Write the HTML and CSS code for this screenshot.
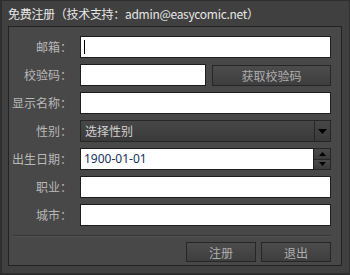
FILE: index.html
```
<!DOCTYPE html>
<html lang="zh">
<head>
<meta charset="utf-8">
<link rel="stylesheet" href="styles.css">
</head>
<body>
<div class="window">
  <div class="title">免费注册（技术支持：admin@easycomic.net）</div>
  <div class="panel">
    <div class="form">
      <label class="lbl">邮箱：</label>
      <div class="field"><div class="input"><span class="caret"></span></div></div>

      <label class="lbl">校验码：</label>
      <div class="field split">
        <div class="input short"></div>
        <button class="btn get">获取校验码</button>
      </div>

      <label class="lbl">显示名称：</label>
      <div class="field"><div class="input"></div></div>

      <label class="lbl">性别：</label>
      <div class="field">
        <div class="select">
          <span class="sel-text">选择性别</span>
          <span class="sel-arrow"><svg width="9" height="5" viewBox="0 0 9 5"><path d="M0 0h9L4.5 5z" fill="#000"/></svg></span>
        </div>
      </div>

      <label class="lbl">出生日期：</label>
      <div class="field">
        <div class="date">
          <div class="input date-in">1900-01-01</div>
          <div class="spin">
            <span class="spin-btn"><svg width="7" height="4" viewBox="0 0 7 4"><path d="M0 4h7L3.5 0z" fill="#000"/></svg></span>
            <span class="spin-btn"><svg width="7" height="4" viewBox="0 0 7 4"><path d="M0 0h7L3.5 4z" fill="#000"/></svg></span>
          </div>
        </div>
      </div>

      <label class="lbl">职业：</label>
      <div class="field"><div class="input"></div></div>

      <label class="lbl">城市：</label>
      <div class="field"><div class="input"></div></div>
    </div>
    <div class="sep"></div>
    <div class="actions">
      <button class="btn act">注册</button>
      <button class="btn act">退出</button>
    </div>
  </div>
</div>
</body>
</html>
```

FILE: styles.css
```
* { box-sizing: border-box; }
html, body { margin: 0; padding: 0; background: #3c3c3c; }
body {
  font-family: "Noto Sans CJK SC", "Noto Sans", sans-serif;
  font-size: 12px;
}
.window {
  width: 350px;
  height: 275px;
  background: #404040;
  border: 2px solid #2e2e2e;
  border-top-width: 1px;
  border-right-width: 1px;
  display: flex;
  flex-direction: column;
}
.title {
  height: 25px;
  line-height: 25px;
  padding-left: 6px;
  color: #e6e6e6;
  font-size: 12px;
  letter-spacing: -0.3px;
}
.panel {
  margin-left: 6px;
  width: 334px;
  height: 240px;
  background: #484848;
  border: 1px solid #222;
  padding: 9px 10px 0 0;
  display: flex;
  flex-direction: column;
}
.form {
  display: grid;
  grid-template-columns: 71px 1fr;
  row-gap: 6px;
}
.lbl {
  height: 22px;
  line-height: 22px;
  text-align: right;
  padding-right: 8px;
  color: #b8b8b8;
}
.field { height: 22px; display: flex; }
.split { gap: 6px; }
.input {
  flex: 1;
  height: 22px;
  background: #fff;
  border: 1px solid #1e1e1e;
  position: relative;
}
.short { flex: 0 0 126px; }
.caret {
  position: absolute;
  left: 3px;
  top: 3px;
  width: 1px;
  height: 14px;
  background: #000;
}
.btn {
  font-family: inherit;
  font-size: 12px;
  color: #aeaeae;
  background: linear-gradient(#4c4c4c, #3e3e3e);
  border: 1px solid #262626;
  padding: 0;
  margin: 0;
}
.get { flex: 1; height: 21px; margin-top: 1px; }
.select {
  flex: 1;
  display: flex;
  background: linear-gradient(#474747, #3a3a3a);
  border: 1px solid #262626;
}
.sel-text {
  flex: 1;
  line-height: 20px;
  padding-left: 4px;
  color: #d0d0d0;
}
.sel-arrow {
  width: 16px;
  border-left: 1px solid #262626;
  display: flex;
  align-items: center;
  justify-content: center;
}
.date { flex: 1; display: flex; }
.date-in {
  line-height: 20px;
  padding-left: 3px;
  color: #14325c;
  font-family: "Noto Sans", "Noto Sans CJK SC", sans-serif;
  font-size: 12px;
}
.spin {
  width: 17px;
  display: flex;
  flex-direction: column;
  border: 1px solid #262626;
  border-left: none;
}
.spin-btn {
  flex: 1;
  display: flex;
  align-items: center;
  justify-content: center;
  background: linear-gradient(#4a4a4a, #3c3c3c);
}
.spin-btn + .spin-btn { border-top: 1px solid #262626; }
.sep {
  margin: 9px 0 0 4px;
  height: 2px;
  border-top: 1px solid #363636;
  border-bottom: 1px solid #525252;
}
.actions {
  display: flex;
  justify-content: flex-end;
  gap: 5px;
  margin-top: 5px;
}
.act { width: 70px; height: 20px; }
```
